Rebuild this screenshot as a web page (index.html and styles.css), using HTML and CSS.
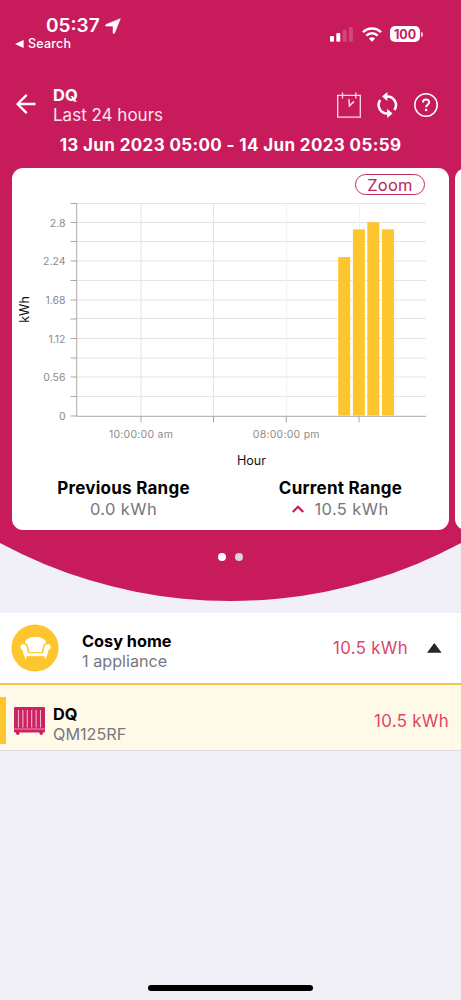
FILE: index.html
```html
<!DOCTYPE html>
<html lang="en">
<head>
    <meta charset="UTF-8">
    <meta name="viewport" content="width=device-width, initial-scale=1.0">
    <title>DQ - Last 24 hours</title>
    <link rel="stylesheet" href="styles.css">
</head>
<body>
    <div class="app">
        <header class="hero">
            <div class="status-bar">
                <div class="status-left">
                    <div class="clock">
                        <span>05:37</span>
                        <svg width="16" height="16" viewBox="0 0 16 16"><path d="M15.3.7 9.6 15c-.4.8-1.5.7-1.5-.3V8.1H1.4c-1.1 0-1.2-1.2-.3-1.6z" fill="#fff" stroke="#fff" stroke-width=".6"/></svg>
                    </div>
                    <div class="back-app">
                        <svg width="9" height="8" viewBox="0 0 9 8"><path d="M0 4 8.6 0v8z" fill="#fff"/></svg>
                        <span>Search</span>
                    </div>
                </div>
                <div class="status-right">
                    <svg width="23" height="15" viewBox="0 0 23 15" fill="#fff">
                        <rect x="0" y="9" width="4" height="5.7" rx="1"/>
                        <rect x="6.3" y="6" width="4" height="8.7" rx="1"/>
                        <rect x="12.6" y="3" width="4" height="11.7" rx="1" opacity=".2"/>
                        <rect x="18.9" y="0" width="4" height="14.7" rx="1" opacity=".2"/>
                    </svg>
                    <svg class="wifi" width="20" height="15" viewBox="0 0 20 15" fill="none" stroke="#fff" stroke-width="2.5">
                        <path d="M1 5.2c5.1-5.1 12.9-5.1 18 0"/>
                        <path d="M4.3 8.7c3.3-3.2 8.1-3.2 11.4 0"/>
                        <path d="M10 14.7 6.9 11.6c1.8-1.7 4.4-1.7 6.2 0z" fill="#fff" stroke="none"/>
                    </svg>
                    <div class="battery">100</div>
                    <div class="battery-tip"></div>
                </div>
            </div>

            <div class="title-bar">
                <svg class="back" width="20" height="20" viewBox="0 0 20 20" fill="none" stroke="#fff" stroke-width="2.3"><path d="M19.5 10H1.7M10.7.9 1.6 10l9.1 9.1"/></svg>
                <div class="title">
                    <div class="title-name">DQ</div>
                    <div class="title-sub">Last 24 hours</div>
                </div>
                <div class="actions">
                    <svg width="24" height="26" viewBox="0 0 24 26" fill="none" stroke="#ffd9e8" stroke-width="1.3">
                        <path d="M.7 3.3h22.6v21.8H.7zM5.5.5v6M18.8.5v6"/>
                        <path d="M11.9 7.3l.6 6.5 4.6-4.4" stroke-width="1.5"/>
                    </svg>
                    <svg width="21" height="26" viewBox="0 0 21 26" fill="none" stroke="#fff" stroke-width="2.5">
                        <path d="M10 4.5A8.6 8.6 0 0 1 17.4 18"/>
                        <path d="M3.2 8A8.6 8.6 0 0 0 10.6 21.5"/>
                        <path d="M10.4 0v9L5 4.5zM10.2 17v9l5.4-4.5z" fill="#fff" stroke="none"/>
                    </svg>
                    <svg width="24" height="24" viewBox="0 0 24 24" fill="none" stroke="#fff">
                        <circle cx="12" cy="12" r="11.2" stroke-width="1.5"/>
                        <path d="M8.9 9.6c0-4.1 6.3-4 6.3-.3 0 2.4-3.1 2.5-3.1 5" stroke-width="1.9"/>
                        <circle cx="12.1" cy="17" r="1.3" fill="#fff" stroke="none"/>
                    </svg>
                </div>
            </div>

            <div class="date-range">13 Jun 2023 05:00 - 14 Jun 2023 05:59</div>

            <div class="carousel">
                <section class="card">
                    <button class="zoom">Zoom</button>
                    <svg class="chart" width="437" height="276" viewBox="0 27 437 276">
                        <g class="grid">
                            <path d="M65 35.5h349M65 54.5h349M65 73.5h349M65 93h349M65 112.5h349M65 132h349M65 150.5h349M65 170.5h349M65 190h349M65 209h349M65 228.5h349"/>
                            <path d="M129 35v213M201.5 35v213"/>
                            <path class="faint" d="M274.5 35v213M347.5 35v213"/>
                        </g>
                        <g class="bars">
                            <rect x="326.2" y="89" width="12" height="158.5"/>
                            <rect x="340.9" y="61.3" width="12" height="186.2"/>
                            <rect x="355.3" y="54.2" width="12" height="193.3"/>
                            <rect x="370" y="61.3" width="12" height="186.2"/>
                        </g>
                        <g class="axis">
                            <path d="M64.7 35v213.3H414"/>
                            <path d="M58.5 35.5h6M58.5 54.5h6M58.5 73.5h6M58.5 93h6M58.5 112.5h6M58.5 132h6M58.5 151h6M58.5 170.5h6M58.5 190h6M58.5 209h6M58.5 228.5h6M58.5 248h6"/>
                            <path d="M129 248v6.5M201.5 248v6.5M274.3 248v6.5M347 248v6.5"/>
                        </g>
                        <g class="ticks-y">
                            <text x="53.5" y="58.5">2.8</text>
                            <text x="53.5" y="97">2.24</text>
                            <text x="53.5" y="135.6">1.68</text>
                            <text x="53.5" y="174.5">1.12</text>
                            <text x="53.5" y="213">0.56</text>
                            <text x="53.5" y="252">0</text>
                        </g>
                        <g class="ticks-x">
                            <text x="129" y="270">10:00:00 am</text>
                            <text x="274.3" y="270">08:00:00 pm</text>
                        </g>
                        <text class="axis-title" x="239.5" y="297">Hour</text>
                        <text class="axis-title" transform="translate(16.5 141.5) rotate(-90)">kWh</text>
                    </svg>
                    <div class="ranges">
                        <div class="range">
                            <div class="range-label">Previous Range</div>
                            <div class="range-value">0.0 kWh</div>
                        </div>
                        <div class="range">
                            <div class="range-label">Current Range</div>
                            <div class="range-value">
                                <svg width="12" height="8" viewBox="0 0 12 8" fill="none" stroke="#c81b5c" stroke-width="2.2"><path d="M.8 7 6 1.7 11.2 7"/></svg>
                                <span>10.5 kWh</span>
                            </div>
                        </div>
                    </div>
                </section>
                <section class="card"></section>
            </div>

            <div class="dots">
                <span class="dot active"></span>
                <span class="dot"></span>
            </div>
        </header>

        <main class="list">
            <div class="group">
                <svg width="48" height="48" viewBox="0 0 48 48">
                    <circle cx="24" cy="24" r="23.6" fill="#fec62e"/>
                    <path d="M13.8 18.5c1.5-7.5 19.9-7.5 21.4 0-2.3 1-3.4 3-3.9 6.5L30.7 28H18.3l-.6-3c-.5-3.5-1.6-5.5-3.9-6.5z" fill="#fff"/>
                    <path d="M9 23.2c-.3-4.3 6.3-4.5 7-.3l1 5.8h15l1-5.8c.7-4.2 7.3-4 7 .3-.1 1.7-1.4 2.5-2.4 3.1l-1.2 6.3h-.8l-.3 3.200h-1.500l-.6-3.200H15.800l-.6 3.200h-1.500l-.3-3.200h-.8l-1.200-6.300c-1-.6-2.300-1.400-2.400-3.100z" fill="#fff" stroke="#fec62e" stroke-width=".8"/>
                </svg>
                <div class="group-text">
                    <div class="name">Cosy home</div>
                    <div class="detail">1 appliance</div>
                </div>
                <div class="usage">10.5 kWh</div>
                <svg class="caret" width="15" height="10" viewBox="0 0 15 10"><path d="M0 9.7 7.3 0l7.3 9.7z" fill="#262626"/></svg>
            </div>
            <div class="appliance">
                <div class="marker"></div>
                <svg class="heater" width="31" height="28" viewBox="0 0 31 28">
                    <path d="M1 0h29a1 1 0 0 1 1 1v23.5a1 1 0 0 1-1 1H1a1 1 0 0 1-1-1V1a1 1 0 0 1 1-1zM2 25h3.6v1.2a1.8 1.8 0 0 1-3.6 0zM25.4 25H29v1.2a1.8 1.8 0 0 1-3.6 0z" fill="#cb2261"/>
                    <path d="M4.5 3v17.5M8.9 3v17.5M13.3 3v17.5M17.7 3v17.5M22.1 3v17.5M26.5 3v17.5" stroke="#f7b3c9" stroke-width="1.1"/>
                    <path d="M0 22h31" stroke="#f08fae" stroke-width="1"/>
                </svg>
                <div class="appliance-text">
                    <div class="name">DQ</div>
                    <div class="detail">QM125RF</div>
                </div>
                <div class="usage">10.5 kWh</div>
            </div>
        </main>

        <div class="home-indicator"></div>
    </div>
</body>
</html>
```
FILE: styles.css
```css
* {
  box-sizing: border-box;
}

body {
  margin: 0;
  background-color: #f1f0f6;
  font-family: Inter, 'Liberation Sans', sans-serif;
}

.app {
  display: flex;
  flex-direction: column;
  width: 461px;
  height: 1000px;
  overflow: hidden;
}

/* Pink header, rounded off at the bottom by a large circle */
.hero {
  height: 601px;
  flex: none;
  background-color: #c81b5c;
  color: #fff;
  clip-path: circle(487px at 50% 114px);
}

.status-bar {
  display: flex;
  justify-content: space-between;
  height: 80px;
}

.status-left {
  padding: 14px 0 0 15px;
}

.clock {
  display: flex;
  align-items: center;
  gap: 5px;
  padding-left: 31px;
  font-size: 19px;
  font-weight: 600;
  line-height: 23px;
}

.back-app {
  display: flex;
  align-items: center;
  gap: 4px;
  font-size: 12.5px;
  font-weight: 500;
  line-height: 13px;
  letter-spacing: 0.2px;
}

.status-right {
  display: flex;
  align-items: center;
  height: 16px;
  margin: 26px 38px 0 0;
}

.wifi {
  margin: 0 8px 0 9px;
}

.battery {
  width: 30px;
  height: 16px;
  border-radius: 5px;
  background-color: #fff;
  color: #c81b5c;
  font-size: 12.5px;
  font-weight: 700;
  line-height: 17px;
  text-align: center;
}

.battery-tip {
  width: 2px;
  height: 5px;
  margin-left: 1px;
  border-radius: 0 2px 2px 0;
  background-color: #f5c6d8;
}

.title-bar {
  display: flex;
  height: 53px;
  padding: 0 23px 0 16px;
}

.back {
  margin-top: 14px;
}

.title {
  flex: 1;
  padding: 5px 0 0 17px;
}

.title-name {
  font-size: 16.5px;
  font-weight: 700;
  line-height: 20px;
}

.title-sub {
  color: #fbe4ed;
  font-size: 17px;
  line-height: 21px;
}

.actions {
  display: flex;
  align-items: center;
  gap: 16px;
  height: 50px;
}

.date-range {
  height: 35px;
  font-size: 17px;
  font-weight: 700;
  line-height: 25px;
  letter-spacing: 0.37px;
  text-align: center;
}

.carousel {
  display: flex;
  gap: 6px;
  height: 362px;
  padding-left: 12px;
  overflow: hidden;
}

.card {
  display: flex;
  flex-direction: column;
  flex: none;
  width: 437px;
  border-radius: 11px;
  background-color: #fff;
}

.zoom {
  align-self: flex-end;
  width: 70px;
  height: 21px;
  margin: 6px 24px 0 0;
  padding: 0;
  border: 1.3px solid #c0305f;
  border-radius: 11px;
  background-color: #fff;
  color: #b92556;
  font: 16.5px/18px Inter, sans-serif;
  letter-spacing: 0.2px;
}

.grid {
  fill: none;
  stroke: #e4e4e4;
}

.grid .faint {
  stroke: #f2f2f2;
}

.bars {
  fill: #fec62e;
}

.axis {
  fill: none;
  stroke: #a8a8a8;
}

.ticks-y,
.ticks-x {
  fill: #8c8c8c;
  font-size: 10.5px;
}

.ticks-y {
  text-anchor: end;
}

.ticks-x {
  letter-spacing: 0.25px;
  text-anchor: middle;
}

.axis-title {
  fill: #111;
  font-size: 12.5px;
  text-anchor: middle;
}

.ranges {
  display: flex;
  padding: 7px 0 0 3px;
}

.range {
  width: 50%;
  text-align: center;
}

.range-label {
  color: #000;
  font-size: 17px;
  font-weight: 700;
  line-height: 21px;
  letter-spacing: 0.25px;
}

.range-value {
  display: flex;
  align-items: center;
  justify-content: center;
  gap: 10px;
  color: #77777f;
  font-size: 16.5px;
  line-height: 20px;
  letter-spacing: 0.4px;
}

.dots {
  display: flex;
  justify-content: center;
  gap: 9px;
  padding-top: 23px;
}

.dot {
  width: 8px;
  height: 8px;
  border-radius: 50%;
  background-color: #dcd3d8;
}

.dot.active {
  background-color: #fff;
}

.list {
  margin-top: 12px;
}

.group {
  display: flex;
  align-items: center;
  height: 70px;
  padding: 0 19px 0 11px;
  background-color: #fff;
}

.group-text {
  flex: 1;
  padding: 6px 0 0 23px;
}

.name {
  color: #000;
  font-size: 16.3px;
  font-weight: 700;
  line-height: 20px;
}

.detail {
  color: #78787f;
  font-size: 16.2px;
  line-height: 20px;
}

.usage {
  color: #dc4568;
  font-size: 16.8px;
  letter-spacing: 0.35px;
}

.caret {
  margin-left: 19px;
}

.appliance {
  display: flex;
  align-items: center;
  height: 68px;
  padding-right: 12px;
  border-top: 2px solid #f6c440;
  border-bottom: 1px solid #dcdadc;
  background-color: #fff9e8;
}

.appliance .usage {
  padding-top: 6px;
}

.marker {
  width: 6px;
  height: 47px;
  margin: 6px 8px 0 0;
  background-color: #fec62e;
}

.heater {
  margin-top: 7px;
}

.appliance-text {
  flex: 1;
  padding: 12px 0 0 8px;
}

.home-indicator {
  width: 165px;
  height: 6px;
  margin: auto auto 9px;
  border-radius: 3px;
  background-color: #000;
}
```
